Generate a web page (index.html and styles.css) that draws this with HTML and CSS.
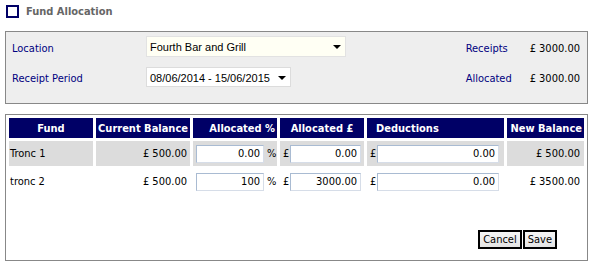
FILE: index.html
```html
<!DOCTYPE html>
<html>
<head>
<meta charset="utf-8">
<title>Fund Allocation</title>
<link rel="stylesheet" href="styles.css">
</head>
<body>
<div class="page">
  <div class="title">
    <span class="title-icon"></span>
    <span class="title-text">Fund Allocation</span>
  </div>

  <div class="panel">
    <div class="filters">
      <div class="label">Location</div>
      <div class="select select-wide">
        <span class="select-text">Fourth Bar and Grill</span>
        <svg class="arrow" width="8" height="4" viewBox="0 0 8 4"><path d="M0 0H8L4 4Z" fill="#000"/></svg>
      </div>
      <div class="label">Receipt Period</div>
      <div class="select select-narrow">
        <span class="select-text">08/06/2014 - 15/06/2015</span>
        <svg class="arrow" width="8" height="4" viewBox="0 0 8 4"><path d="M0 0H8L4 4Z" fill="#000"/></svg>
      </div>
    </div>
    <div class="totals">
      <div class="label">Receipts</div>
      <div class="value">£ 3000.00</div>
      <div class="label">Allocated</div>
      <div class="value">£ 3000.00</div>
    </div>
  </div>

  <div class="alloc">
    <table class="grid">
      <colgroup>
        <col class="c-fund">
        <col class="c-cur">
        <col class="c-pct">
        <col class="c-amt">
        <col class="c-ded">
        <col class="c-new">
      </colgroup>
      <thead>
        <tr>
          <th class="center">Fund</th>
          <th class="right">Current Balance</th>
          <th class="right">Allocated %</th>
          <th class="center">Allocated £</th>
          <th class="left">Deductions</th>
          <th class="right">New Balance</th>
        </tr>
      </thead>
      <tbody>
        <tr class="shaded">
          <td class="fund">Tronc 1</td>
          <td class="num">£ 500.00</td>
          <td class="pct"><input class="field f-pct" value="0.00"><span class="unit">%</span></td>
          <td class="amt"><span class="cur">£</span><input class="field f-amt" value="0.00"></td>
          <td class="ded"><span class="cur">£</span><input class="field f-ded" value="0.00"></td>
          <td class="num new">£ 500.00</td>
        </tr>
        <tr>
          <td class="fund">tronc 2</td>
          <td class="num">£ 500.00</td>
          <td class="pct"><input class="field f-pct" value="100"><span class="unit">%</span></td>
          <td class="amt"><span class="cur">£</span><input class="field f-amt" value="3000.00"></td>
          <td class="ded"><span class="cur">£</span><input class="field f-ded" value="0.00"></td>
          <td class="num new">£ 3500.00</td>
        </tr>
      </tbody>
    </table>
    <div class="actions">
      <button class="btn">Cancel</button>
      <button class="btn">Save</button>
    </div>
  </div>
</div>
</body>
</html>
```

FILE: styles.css
```css
* { box-sizing: border-box; }

body {
  margin: 0;
  background: #fff;
  font-family: "DejaVu Sans Condensed", "DejaVu Sans", sans-serif;
  font-size: 11px;
  color: #000;
}

.page {
  width: 583px;
  margin-left: 5px;
}

/* title */
.title {
  display: flex;
  align-items: center;
  gap: 7px;
  height: 13px;
  margin-top: 5px;
  margin-bottom: 13px;
  padding-left: 1px;
}
.title-icon {
  width: 13px;
  height: 13px;
  border: 2px solid #000066;
  background: #fff;
}
.title-text {
  font-weight: bold;
  color: #666;
  font-size: 11px;
}

/* filter panel */
.panel {
  display: flex;
  justify-content: space-between;
  height: 73px;
  border: 1px solid #888;
  background: #eeeeee;
  padding: 4px 7px 0 6px;
}
.filters, .totals {
  display: grid;
  grid-template-rows: 21px 20px;
  row-gap: 10px;
  align-items: center;
}
.filters { grid-template-columns: 134px auto; }
.totals { grid-template-columns: 64px auto; }
.label, .value { padding-top: 3px; }
.label { color: #000080; }
.value { text-align: right; }

.select {
  display: flex;
  align-items: center;
  justify-content: space-between;
  height: 100%;
  border: 1px solid #e2e2e2;
  padding: 1px 4px 0 3px;
  font-family: "Liberation Sans", Arial, sans-serif;
  font-size: 11px;
}
.select-wide { width: 200px; background: #fffff4; }
.select-narrow { width: 145px; background: #fff; border-color: #dcdcdc; }
.arrow { display: block; }

/* allocation table */
.alloc {
  margin-top: 10px;
  border: 1px solid #888;
  padding-bottom: 11px;
}
.grid {
  width: 100%;
  table-layout: fixed;
  border-collapse: separate;
  border-spacing: 3px;
}
.c-fund { width: 84px; }
.c-cur { width: 94px; }
.c-pct { width: 84px; }
.c-amt { width: 84px; }
.c-ded { width: 137px; }
.c-new { width: 77px; }

.grid th {
  height: 20px;
  padding: 0 2px;
  background: #000066;
  color: #fff;
  font-weight: bold;
  white-space: nowrap;
}
.grid th.center { text-align: center; }
.grid th.right { text-align: right; }
.grid th.left { text-align: left; padding-left: 9px; }

.grid td {
  height: 25px;
  padding: 0;
  white-space: nowrap;
  vertical-align: middle;
}
.shaded td { background: #dcdcdc; }
.fund { padding-left: 1px !important; }
.num { text-align: right; padding-right: 3px !important; }
.new { padding-right: 4px !important; }

.pct { padding-left: 3px !important; }
.amt { padding-left: 3px !important; }
.ded { padding-left: 3px !important; }

.field {
  height: 18px;
  border: 1px solid #a9bbd2;
  border-right-color: #d6dde8;
  border-bottom-color: #d6dde8;
  background: #fff;
  text-align: right;
  padding: 0 3px;
  font-family: "DejaVu Sans Condensed", "DejaVu Sans", sans-serif;
  font-size: 11px;
  color: #000;
  vertical-align: middle;
}
.f-pct { width: 68px; }
.f-amt { width: 71px; }
.f-ded { width: 122px; }
.unit { margin-left: 3px; vertical-align: middle; }
.cur { display: inline-block; width: 7px; vertical-align: middle; }

.actions {
  display: flex;
  justify-content: flex-end;
  gap: 1px;
  margin-top: 33px;
  padding-right: 30px;
}
.btn {
  height: 19px;
  padding: 0 3px;
  border: 2px solid #000;
  background: linear-gradient(#f6f6f6, #e4e4e4);
  font-family: "DejaVu Sans Condensed", "DejaVu Sans", sans-serif;
  font-size: 11px;
  color: #000;
}
```
